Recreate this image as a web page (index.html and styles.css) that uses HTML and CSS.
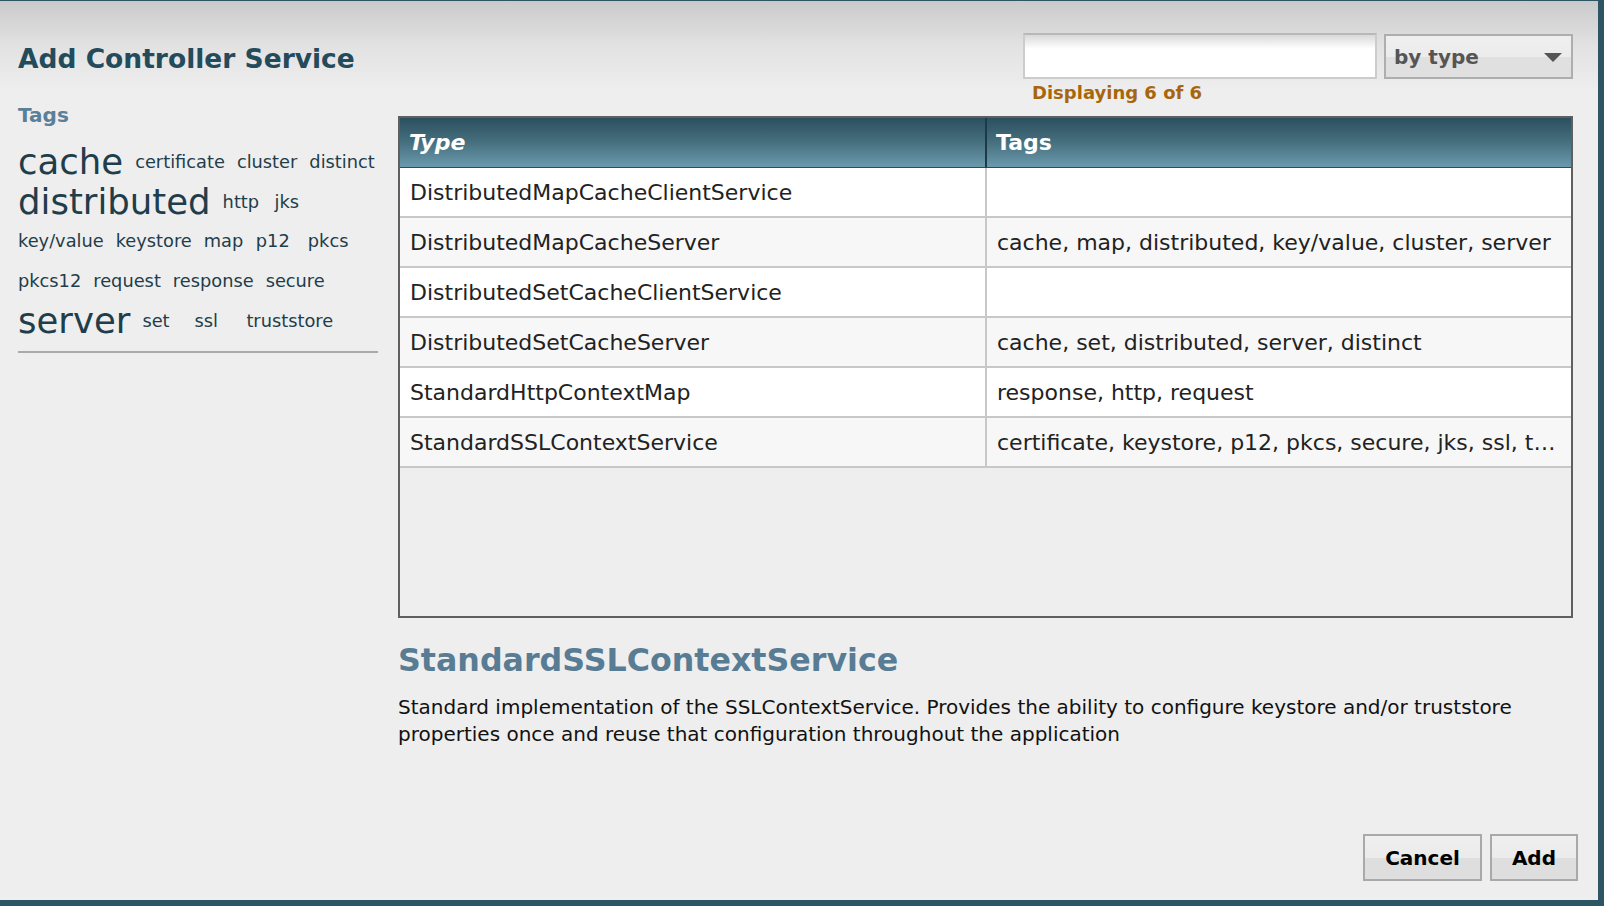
FILE: index.html
```html
<!DOCTYPE html>
<html lang="en">
<head>
<meta charset="utf-8">
<title>Add Controller Service</title>
<link rel="stylesheet" href="styles.css">
</head>
<body>
<div class="dialog">
  <div class="main">
    <div class="left-col">
      <h1 class="dialog-title">Add Controller Service</h1>
      <h2 class="tags-label">Tags</h2>
      <ul class="tag-cloud">
        <li class="tag big">cache</li>
        <li class="tag">certificate</li>
        <li class="tag">cluster</li>
        <li class="tag">distinct</li>
        <li class="tag big">distributed</li>
        <li class="tag">http</li>
        <li class="tag">jks</li>
        <li class="tag">key/value</li>
        <li class="tag">keystore</li>
        <li class="tag">map</li>
        <li class="tag">p12</li>
        <li class="tag">pkcs</li>
        <li class="tag">pkcs12</li>
        <li class="tag">request</li>
        <li class="tag">response</li>
        <li class="tag">secure</li>
        <li class="tag big">server</li>
        <li class="tag">set</li>
        <li class="tag">ssl</li>
        <li class="tag">truststore</li>
      </ul>
    </div>
    <div class="right-col">
      <div class="filter-bar">
        <div class="search-box"></div>
        <div class="filter-type">
          <span>by type</span>
          <span class="arrow"></span>
        </div>
      </div>
      <div class="displaying">Displaying 6 of 6</div>
      <div class="table-wrap">
        <table class="types">
          <colgroup><col class="col-type"><col class="col-tags"></colgroup>
          <thead>
            <tr><th class="sorted">Type</th><th>Tags</th></tr>
          </thead>
          <tbody>
            <tr><td>DistributedMapCacheClientService</td><td></td></tr>
            <tr><td>DistributedMapCacheServer</td><td>cache, map, distributed, key/value, cluster, server</td></tr>
            <tr><td>DistributedSetCacheClientService</td><td></td></tr>
            <tr><td>DistributedSetCacheServer</td><td>cache, set, distributed, server, distinct</td></tr>
            <tr><td>StandardHttpContextMap</td><td>response, http, request</td></tr>
            <tr><td>StandardSSLContextService</td><td>certificate, keystore, p12, pkcs, secure, jks, ssl, truststore, pkcs12</td></tr>
          </tbody>
        </table>
      </div>
      <h3 class="detail-title">StandardSSLContextService</h3>
      <p class="detail-desc">Standard implementation of the SSLContextService. Provides the ability to configure keystore and/or truststore properties once and reuse that configuration throughout the application</p>
    </div>
  </div>
  <div class="footer">
    <button class="btn">Cancel</button>
    <button class="btn">Add</button>
  </div>
</div>
</body>
</html>
```
FILE: styles.css
```css
html, body {
  margin: 0;
  padding: 0;
}
body {
  background: #2e5565;
  font-family: "DejaVu Sans", Verdana, sans-serif;
  padding-top: 1px;
}
.dialog {
  box-sizing: border-box;
  width: 1598px;
  height: 899px;
  padding: 0 25px 0 18px;
  display: flex;
  flex-direction: column;
  background: linear-gradient(to bottom, #cacaca 0px, #e2e2e2 45px, #eeeeee 90px, #eeeeee 100%);
}
.main {
  display: grid;
  grid-template-columns: 360px 1fr;
  column-gap: 20px;
}
.left-col {
  padding-top: 42px;
}
.dialog-title {
  margin: 0;
  font-size: 26.5px;
  line-height: 32px;
  font-weight: bold;
  color: #244b5c;
}
.tags-label {
  margin: 28px 0 0;
  font-size: 20px;
  line-height: 24px;
  font-weight: bold;
  color: #5a7f98;
}
.tag-cloud {
  list-style: none;
  margin: 15px 0 0;
  padding: 0 0 10px;
  display: flex;
  flex-wrap: wrap;
  align-items: center;
  column-gap: 12px;
  border-bottom: 2px solid #aaaaaa;
}
.tag {
  font-size: 17.8px;
  line-height: 39.7px;
  min-width: 40px;
  color: #1f3d4a;
}
.tag.big {
  font-size: 35.5px;
}
.right-col {
  padding-top: 32px;
  min-width: 0;
}
.filter-bar {
  display: flex;
  justify-content: flex-end;
  align-items: flex-start;
  gap: 7px;
}
.search-box {
  box-sizing: border-box;
  width: 354px;
  height: 46px;
  border: 2px solid #cccccc;
  border-top-color: #b8b8b8;
  background: linear-gradient(to bottom, #d9d9d9 0px, #ffffff 14px, #ffffff 100%);
}
.filter-type {
  box-sizing: border-box;
  width: 189px;
  height: 45px;
  margin-top: 1px;
  border: 2px solid #aeaeae;
  background: linear-gradient(to bottom, #efefef 0%, #ececec 50%, #e0e0e0 52%, #e0e0e0 100%);
  display: flex;
  align-items: center;
  justify-content: space-between;
  padding: 0 9px 0 8px;
  font-size: 20px;
  font-weight: bold;
  color: #555555;
}
.arrow {
  width: 0;
  height: 0;
  border-left: 9px solid transparent;
  border-right: 9px solid transparent;
  border-top: 9px solid #555555;
  margin-top: 2px;
}
.displaying {
  margin: 4px 0 0 9px;
  padding-left: calc(100% - 354px - 7px - 189px);
  font-size: 18px;
  line-height: 20px;
  font-weight: bold;
  color: #a8660c;
}
.table-wrap {
  box-sizing: border-box;
  margin-top: 13px;
  height: 502px;
  border: 2px solid #5f5f5f;
  background: #eeeeee;
  overflow: hidden;
}
.types {
  width: 100%;
  table-layout: fixed;
  border-collapse: separate;
  border-spacing: 0;
  font-size: 22px;
  color: #222222;
}
.col-type {
  width: 585px;
}
.types th {
  box-sizing: border-box;
  height: 50px;
  padding: 0 9px;
  text-align: left;
  font-weight: bold;
  color: #ffffff;
  background: linear-gradient(to bottom, #2c4f5f 0%, #46707f 50%, #6b99ad 100%);
  border-bottom: 1px solid #2b4c5a;
}
.types th + th {
  border-left: 2px solid #1c3a48;
}
.types th.sorted {
  font-style: italic;
}
.types td {
  box-sizing: border-box;
  height: 50px;
  padding: 1px 10px 0;
  border-bottom: 2px solid #c8c8c8;
  background: #ffffff;
  white-space: nowrap;
  overflow: hidden;
  text-overflow: ellipsis;
}
.types td + td {
  border-left: 2px solid #c8c8c8;
}
.types tbody tr:nth-child(even) td {
  background: #f7f7f7;
}
.detail-title {
  margin: 20px 0 0;
  font-size: 31.7px;
  line-height: 44px;
  font-weight: bold;
  color: #577c93;
}
.detail-desc {
  margin: 12px 0 0;
  font-size: 20px;
  line-height: 26.5px;
  color: #111111;
}
.footer {
  margin-top: auto;
  display: flex;
  justify-content: flex-end;
  gap: 8px;
  margin-right: -5px;
  padding-bottom: 19px;
}
.btn {
  box-sizing: border-box;
  height: 47px;
  padding: 0 20px;
  border: 2px solid #a9a9a9;
  background: linear-gradient(to bottom, #efefef 0%, #ebebeb 50%, #dedede 52%, #dedede 100%);
  font-family: "DejaVu Sans", Verdana, sans-serif;
  font-size: 20px;
  font-weight: bold;
  color: #000000;
}
```
